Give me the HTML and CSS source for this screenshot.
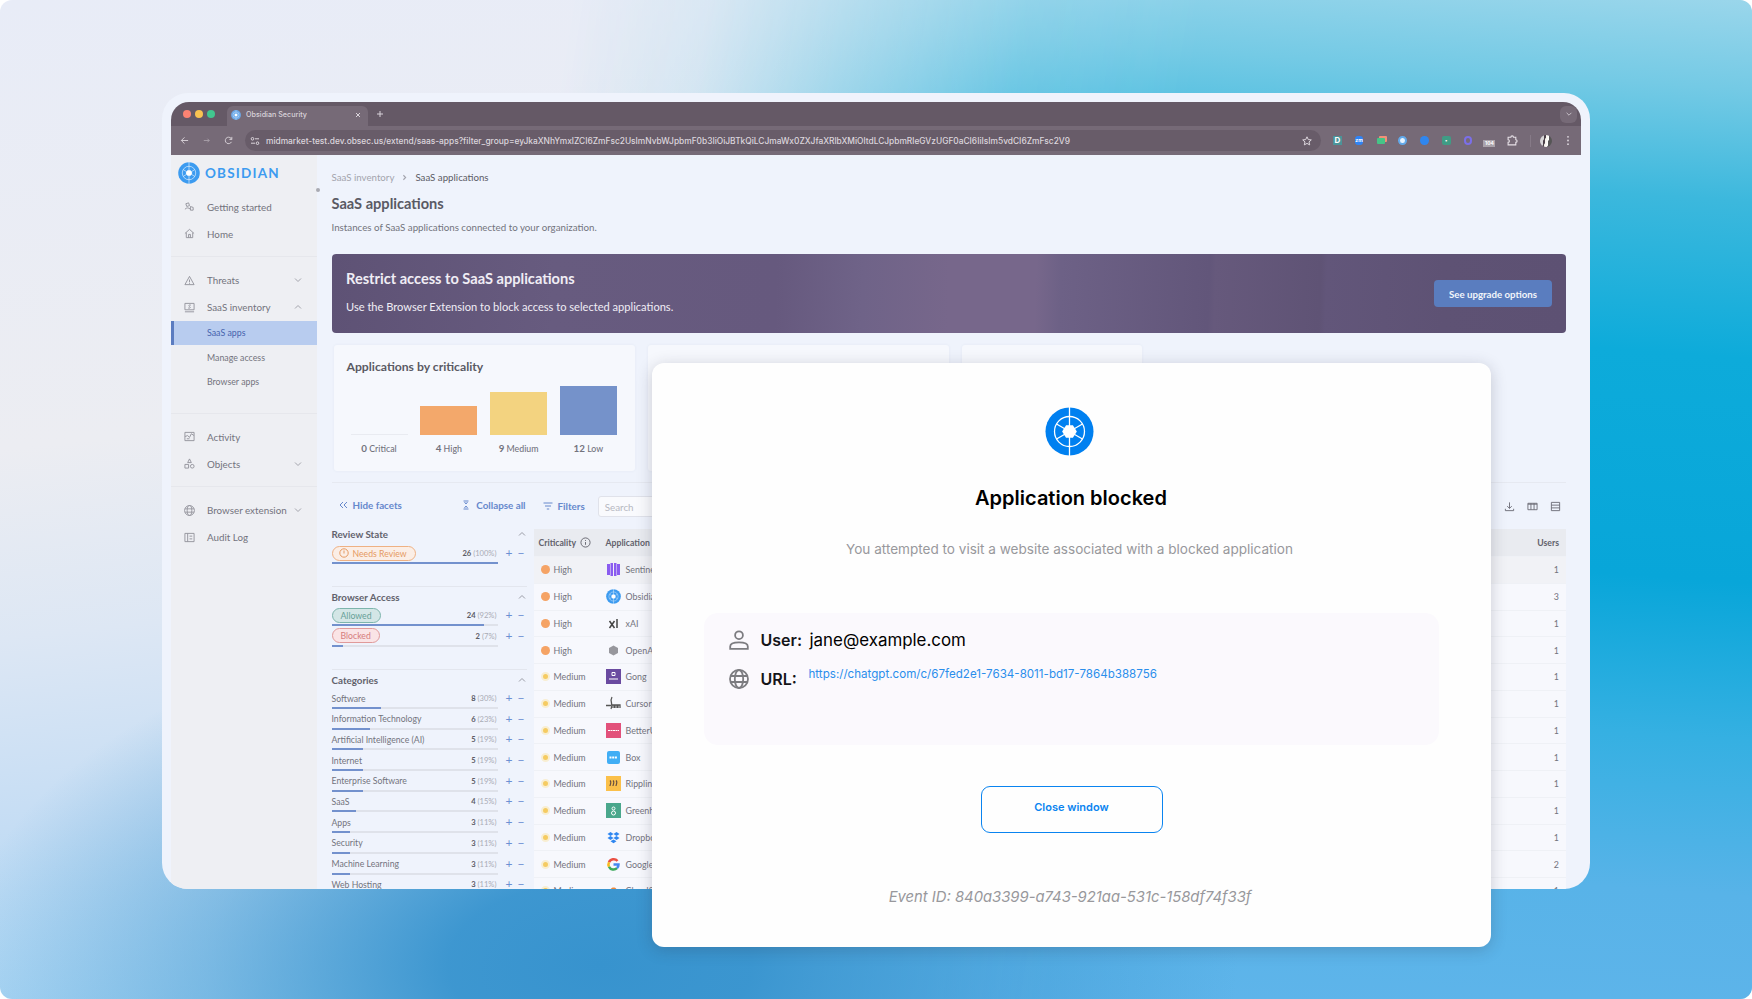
FILE: index.html
```
<!DOCTYPE html>
<html lang="en">
<head>
    <meta charset="UTF-8">
    <meta name="viewport" content="width=device-width, initial-scale=1.0">
    <title>Obsidian Security</title>
    <link rel="stylesheet" href="styles.css">
</head>
<body>
    <svg class="sprite" width="0" height="0">
        <symbol id="logo" viewBox="0 0 50 50">
            <circle cx="25" cy="25" r="24.5" fill="currentColor"/>
            <g fill="none" stroke="#fff" stroke-width="1.3">
                <circle cx="25" cy="25" r="15.3"/>
                <path d="M25 0v50M11.8 17.4l26.4 15.2M38.2 17.4L11.8 32.6"/>
            </g>
            <path fill="#fff" d="M21.5 18.5h7l4 6.5-4 6.5h-7l-4-6.5z"/>
        </symbol>
        <symbol id="down" viewBox="0 0 10 10"><path d="M2 3.5l3 3 3-3"/></symbol>
        <symbol id="up" viewBox="0 0 10 10"><path d="M2 6.5l3-3 3 3"/></symbol>
        <symbol id="globe" viewBox="0 0 20 20">
            <circle cx="10" cy="10" r="9"/>
            <ellipse cx="10" cy="10" rx="4.2" ry="9"/>
            <path d="M1.8 7h16.4M1.8 13h16.4"/>
        </symbol>
    </svg>

    <div class="page">
        <div class="window">
            <div class="browser">
                <div class="tabbar">
                    <div class="lights"><i class="red"></i><i class="yellow"></i><i class="green"></i></div>
                    <div class="tab">
                        <svg class="favicon"><use href="#logo"/></svg>
                        <span>Obsidian Security</span>
                        <svg class="tab-close" viewBox="0 0 6 6"><path d="M1 1l4 4M5 1L1 5"/></svg>
                    </div>
                    <svg class="tab-new" viewBox="0 0 8 8"><path d="M4 1v6M1 4h6"/></svg>
                    <div class="tab-list"><svg viewBox="0 0 10 10"><use href="#down"/></svg></div>
                </div>
                <div class="toolbar">
                    <div class="nav-buttons">
                        <svg viewBox="0 0 10 10"><path d="M9 5H1.5M5 1.5L1.5 5 5 8.5"/></svg>
                        <svg class="dim" viewBox="0 0 10 10"><path d="M2 5h6M6 3l2 2-2 2"/></svg>
                        <svg viewBox="0 0 10 10"><path d="M8.3 6.5A3.6 3.6 0 1 1 7.8 2.6L8.5 3.6M8.7 1v2.8H6"/></svg>
                    </div>
                    <div class="urlbar">
                        <svg viewBox="0 0 10 10"><circle cx="2.5" cy="2.8" r="1.3"/><path d="M5 2.8h4M1 7.2h4"/><circle cx="7.5" cy="7.2" r="1.3"/></svg>
                        <span class="url">midmarket-test.dev.obsec.us/extend/saas-apps?filter_group=eyJkaXNhYmxlZCI6ZmFsc2UsImNvbWJpbmF0b3IiOiJBTkQiLCJmaWx0ZXJfaXRlbXMiOltdLCJpbmRleGVzUGF0aCI6IiIsIm5vdCI6ZmFsc2V9</span>
                        <svg class="star" viewBox="0 0 10 10"><path d="M5 .8l1.3 2.8 3 .3-2.3 2 .7 3L5 7.400 2.300 8.900l.7-3-2.300-2 3-.3z"/></svg>
                    </div>
                    <div class="extensions">
                        <span class="ext ext-d">D</span>
                        <span class="ext ext-zm">zm</span>
                        <span class="ext ext-cards"></span>
                        <span class="ext ext-ring"></span>
                        <span class="ext ext-blue"></span>
                        <span class="ext ext-green">•</span>
                        <span class="ext ext-purple"></span>
                        <span class="ext ext-count">104</span>
                        <svg class="ext" viewBox="0 0 10 10"><path d="M1 2h2.500a1.200 1.200 0 0 1 2.400 0H8v2.300a1.200 1.200 0 0 1 0 2.400V9H1V6.700a1.200 1.200 0 0 0 0-2.400z"/></svg>
                    </div>
                    <span class="avatar"></span>
                    <svg class="menu-dots" viewBox="0 0 4 12"><circle cx="2" cy="2" r="1"/><circle cx="2" cy="6" r="1"/><circle cx="2" cy="10" r="1"/></svg>
                </div>

                <div class="app">
                    <aside class="sidebar">
                        <div class="brand"><svg><use href="#logo"/></svg><span>OBSIDIAN</span></div>
                        <nav>
                            <a class="item"><svg viewBox="0 0 12 12"><path d="M2 3l3-1 1 3-3 1zM1 9c2-2 4-2 6 0M7 6l3 1v3H7z"/></svg>Getting started</a>
                            <a class="item"><svg viewBox="0 0 12 12"><path d="M1 6l5-4.500L11 6M2.500 5v5.500h7V5M5 10.500V7h2v3.500"/></svg>Home</a>
                        </nav>
                        <nav>
                            <a class="item"><svg viewBox="0 0 12 12"><path d="M6 1.500l5 9H1zM6 5v3M6 8.800v.8"/></svg>Threats<svg class="chev"><use href="#down"/></svg></a>
                            <a class="item"><svg viewBox="0 0 12 12"><path d="M1 1.500h10v7H1zM1 10.700h10M7.500 3.500c-2-1-3 .8-1.500 1.500s1 2.300-1.500 1.500"/></svg>SaaS inventory<svg class="chev"><use href="#up"/></svg></a>
                            <a class="sub active">SaaS apps</a>
                            <a class="sub">Manage access</a>
                            <a class="sub">Browser apps</a>
                        </nav>
                        <nav class="after-sub">
                            <a class="item"><svg viewBox="0 0 12 12"><path d="M1 1.500h10v9H1zM1 6l3-1 2 2 2-4 3 2M3 8.500h3"/></svg>Activity</a>
                            <a class="item"><svg viewBox="0 0 12 12"><path d="M6 1l2 4H4zM1 7h4v4H1z"/><circle cx="9" cy="9" r="2"/></svg>Objects<svg class="chev"><use href="#down"/></svg></a>
                        </nav>
                        <nav>
                            <a class="item"><svg viewBox="0 0 20 20" class="thick"><use href="#globe"/></svg>Browser extension<svg class="chev"><use href="#down"/></svg></a>
                            <a class="item"><svg viewBox="0 0 12 12"><path d="M1 1.500h10v9H1zM4 1.500v9M6 4.500h3M6 7.500h3"/></svg>Audit Log</a>
                        </nav>
                        <span class="collapse-handle"></span>
                    </aside>

                    <main>
                        <div class="breadcrumb"><span>SaaS inventory</span><svg viewBox="0 0 6 8"><path d="M2 2l2 2-2 2"/></svg><b>SaaS applications</b></div>
                        <h1>SaaS applications</h1>
                        <p class="intro">Instances of SaaS applications connected to your organization.</p>

                        <section class="banner">
                            <div>
                                <h2>Restrict access to SaaS applications</h2>
                                <p>Use the Browser Extension to block access to selected applications.</p>
                            </div>
                            <button>See upgrade options</button>
                        </section>

                        <section class="cards">
                            <div class="card">
                                <h3>Applications by criticality</h3>
                                <div class="chart">
                                    <div class="col"><div class="bar zero"></div><span><b>0</b> Critical</span></div>
                                    <div class="col"><div class="bar high"></div><span><b>4</b> High</span></div>
                                    <div class="col"><div class="bar medium"></div><span><b>9</b> Medium</span></div>
                                    <div class="col"><div class="bar low"></div><span><b>12</b> Low</span></div>
                                </div>
                            </div>
                            <div class="card wide"></div>
                            <div class="card small"></div>
                        </section>

                        <section class="listing">
                            <div class="facets">
                                <div class="facet-tools">
                                    <a><svg viewBox="0 0 10 10"><path d="M5 2L2 5l3 3M9 2L6 5l3 3"/></svg>Hide facets</a>
                                    <a><svg viewBox="0 0 10 10"><path d="M2.500 1h5M2.500 9h5M3.500 2L5 4l1.500-2M3.500 8L5 6l1.500 2"/></svg>Collapse all</a>
                                </div>
                                <div class="facet-group review">
                                    <h4>Review State<svg class="chev"><use href="#up"/></svg></h4>
                                    <div id="reviewState"></div>
                                </div>
                                <div class="facet-group access">
                                    <h4>Browser Access<svg class="chev"><use href="#up"/></svg></h4>
                                    <div id="browserAccess"></div>
                                </div>
                                <div class="facet-group">
                                    <h4>Categories<svg class="chev"><use href="#up"/></svg></h4>
                                    <div id="categories"></div>
                                </div>
                            </div>
                            <div class="results">
                                <div class="result-tools">
                                    <a><svg viewBox="0 0 10 10"><path d="M.5 2h9M2 5h6M3.800 8h2.400"/></svg>Filters</a>
                                    <div class="search">Search</div>
                                    <div class="view-icons">
                                        <svg viewBox="0 0 12 12"><path d="M6 1.500V8M3.500 5.700L6 8l2.500-2.300M1.500 8.500v2h9v-2"/></svg>
                                        <svg viewBox="0 0 12 12"><path d="M1 2.500h10v7H1zM4.300 2.500v7M7.700 2.500v7M1 3.500h10"/></svg>
                                        <svg viewBox="0 0 12 12"><path d="M1.500 1.500h9v9h-9zM1.500 4.500h9M1.500 7.500h9"/></svg>
                                    </div>
                                </div>
                                <div class="table">
                                    <div class="row head">
                                        <span class="crit">Criticality<svg viewBox="0 0 12 12"><circle cx="6" cy="6" r="5"/><path d="M6 5.500v3M6 3.300v1"/></svg></span>
                                        <span class="app-name">Application</span>
                                        <span class="users">Users</span>
                                    </div>
                                    <div id="rows"></div>
                                </div>
                            </div>
                        </section>
                    </main>
                </div>
            </div>
        </div>

        <div class="modal">
            <svg class="modal-logo"><use href="#logo"/></svg>
            <h2>Application blocked</h2>
            <p class="lead">You attempted to visit a website associated with a blocked application</p>
            <div class="details">
                <div class="detail">
                    <svg viewBox="0 0 20 20"><circle cx="10" cy="5.200" r="3.900"/><path d="M1.200 18.800v-2.300c0-5.400 17.600-5.400 17.600 0v2.300z"/></svg>
                    <b>User:</b><span>jane@example.com</span>
                </div>
                <div class="detail">
                    <svg viewBox="0 0 20 20"><use href="#globe"/></svg>
                    <b>URL:</b><a>https://chatgpt.com/c/67fed2e1-7634-8011-bd17-7864b388756</a>
                </div>
            </div>
            <button>Close window</button>
            <p class="event">Event ID: 840a3399-a743-921aa-531c-158df74f33f</p>
        </div>
    </div>

    <script>
        const reviewState = [['Needs Review', 26, 100, 'needs']];
        const browserAccess = [['Allowed', 24, 92, 'allowed'], ['Blocked', 2, 7, 'blocked']];
        const categories = [
            ['Software', 8, 30], ['Information Technology', 6, 23], ['Artificial Intelligence (AI)', 5, 19],
            ['Internet', 5, 19], ['Enterprise Software', 5, 19], ['SaaS', 4, 15], ['Apps', 3, 11],
            ['Security', 3, 11], ['Machine Learning', 3, 11], ['Web Hosting', 3, 11]
        ];

        // App icons, 15px boxes
        const icons = {
            sentinel: '<path fill="#8a5cf0" d="M1 2h3v11H1zM4.500 1h2.500v13H4.500zM8 1h2.500v13H8zM11 2h3v11h-3z"/>',
            obsidian: '<use href="#logo" width="15" height="15"/>',
            xai: '<path fill="none" stroke="#444" stroke-width="1.500" d="M3.500 5l5 7M8.500 5l-5 7M11 3v9"/>',
            openai: '<path fill="#97979d" d="M7.500 2.500l4.500 2.500v5l-4.500 2.500L3 10V5z"/>',
            gong: '<path fill="#6a4aa0" d="M0 0h15v15H0z"/><path fill="none" stroke="#fff" d="M6 3.500h3v3H6zM3 10h9"/>',
            cursor: '<path fill="none" stroke="#555" stroke-width="1.300" d="M6 1C3 6 8 8 5 13M0 9.500h5M6 12V9h2v3M9 12V9h2v3M12 12V9h2v3"/>',
            better: '<path fill="#e2517b" d="M0 0h15v15H0z"/><path stroke="#fff" stroke-dasharray="2 .5" d="M2 7.500h11"/>',
            box: '<rect x="1" y="1" width="13" height="13" rx="2" fill="#41aef5"/><path stroke="#fff" stroke-width="2" stroke-dasharray="2 .7" d="M3.500 7.500h8"/>',
            rippling: '<path fill="#fbc04a" d="M0 0h15v15H0z"/><path fill="none" stroke="#6b5140" stroke-width="1.200" d="M4 4.500c2 1.500 0 4 0 5.500M7 4.500c2 1.500 0 4 0 5.500M10 4.500c2 1.500 0 4 0 5.500"/>',
            greenhouse: '<path fill="#4aa78c" d="M0 0h15v15H0z"/><g fill="none" stroke="#fff"><circle cx="7.500" cy="5.500" r="1.500"/><circle cx="7.500" cy="10" r="2"/></g>',
            dropbox: '<path fill="#2f86f0" d="M4.500 2l3 2-3 2-3-2zM10.500 2l3 2-3 2-3-2zM4.500 6l3 2-3 2-3-2zM10.500 6l3 2-3 2-3-2zM7.500 9.500l3 1.700-3 2-3-2z"/>',
            google: '<g fill="none" stroke-width="2.500"><path stroke="#ea4f43" d="M11.500 4A5 5 0 0 0 3 5.300"/><path stroke="#f9bb20" d="M3 5.300a5 5 0 0 0 0 4.400"/><path stroke="#3caa5a" d="M3 9.700a5 5 0 0 0 8 1.500"/><path stroke="#4587f0" d="M11 11.200a5 5 0 0 0 1.500-3.700H7.500"/></g>',
            cloud: '<path fill="#f08a3c" d="M1 11c0-3 2-3 3-3 1-5 7-4 7 0 3 0 3 3 3 3z"/>'
        };
        const apps = [
            ['High', 'Sentinel', 'sentinel', 1], ['High', 'Obsidian', 'obsidian', 3], ['High', 'xAI', 'xai', 1],
            ['High', 'OpenAI', 'openai', 1], ['Medium', 'Gong', 'gong', 1], ['Medium', 'Cursor', 'cursor', 1],
            ['Medium', 'BetterUp', 'better', 1], ['Medium', 'Box', 'box', 1], ['Medium', 'Rippling', 'rippling', 1],
            ['Medium', 'Greenhouse', 'greenhouse', 1], ['Medium', 'Dropbox', 'dropbox', 1],
            ['Medium', 'Google', 'google', 2], ['Medium', 'Cloudflare', 'cloud', 1]
        ];

        function facetHtml([name, count, pct, pill]) {
            const clock = pill === 'needs' ? '<svg viewBox="0 0 10 10"><circle cx="5" cy="5" r="4.200"/><path d="M5 2.500v3"/></svg>' : '';
            const label = pill ? `<span class="pill ${pill}">${clock}${name}</span>` : `<span>${name}</span>`;
            return `<div class="facet">
                <div class="facet-line">${label}<span class="count"><b>${count}</b> (${pct}%)</span><i>+</i><i>−</i></div>
                <div class="meter"><div style="width: ${pct}%"></div></div>
            </div>`;
        }

        function rowHtml([level, name, icon, users]) {
            return `<div class="row">
                <span class="crit"><i class="dot ${level.toLowerCase()}"></i>${level}</span>
                <span class="app-name"><svg viewBox="0 0 15 15">${icons[icon]}</svg>${name}</span>
                <span class="users">${users}</span>
            </div>`;
        }

        document.getElementById('reviewState').innerHTML = reviewState.map(facetHtml).join('');
        document.getElementById('browserAccess').innerHTML = browserAccess.map(facetHtml).join('');
        document.getElementById('categories').innerHTML = categories.map(facetHtml).join('');
        document.getElementById('rows').innerHTML = apps.map(rowHtml).join('');
    </script>
</body>
</html>
```
FILE: styles.css
```
* {
    box-sizing: border-box;
}
body {
    margin: 0;
    background: #fff;
    font-family: Lato, sans-serif;
    font-size: 9.8px;
    color: #73737d;
}
h1, h2, h3, h4, p {
    margin: 0;
}
svg {
    flex: none;
    fill: none;
    stroke: currentColor;
}
.sprite {
    position: absolute;
}
#logo {
    stroke: none;
}
.page {
    position: relative;
    width: 1752px;
    height: 999px;
    padding: 93px 162px 0;
    border-radius: 12px;
    overflow: hidden;
    background: linear-gradient(174deg, #e8ecf7 0%, #ecedf2 38%, #dde7f4 54%, #c5ddf4 70%, #a3d3f3 88%, #98d0f2 100%);
}
/* right half of the backdrop, faded in over the light base */
.page::before {
    content: "";
    position: absolute;
    inset: 0;
    background: linear-gradient(184deg, #9ad6eb 0%, #74cae5 8%, #3cb8dd 18%, #0dabda 32%, #08a6d9 52%, #35b0e2 66%, #58b3e8 80%, #62b5eb 100%);
    -webkit-mask-image: linear-gradient(99deg, transparent 30%, rgba(0,0,0,0.13) 37%, rgba(0,0,0,0.5) 45%, rgba(0,0,0,0.88) 54%, #000 63%);
    mask-image: linear-gradient(99deg, transparent 30%, rgba(0,0,0,0.13) 37%, rgba(0,0,0,0.5) 45%, rgba(0,0,0,0.88) 54%, #000 63%);
}
.page::after {
    content: "";
    position: absolute;
    inset: 0;
    background: radial-gradient(ellipse 760px 420px at 600px 965px, #3793ce 0%, rgba(55,147,206,0.94) 20%, rgba(55,147,206,0.42) 52%, rgba(55,147,206,0) 84%);
}
.window {
    position: relative;
    z-index: 1;
    width: 1428px;
    height: 796px;
    padding: 9px 9px 0;
    border-radius: 26px;
    background: #eff3fc;
    overflow: hidden;
}
.browser {
    height: 787px;
    border-radius: 18px 18px 0 0;
    overflow: hidden;
}

/* browser chrome */
.tabbar {
    display: flex;
    align-items: center;
    height: 24px;
    padding: 0 4px 0 12px;
    background: #655966;
    color: #d9d3da;
}
.lights {
    display: flex;
    gap: 4px;
    width: 44px;
}
.lights i {
    width: 8px;
    height: 8px;
    border-radius: 50%;
}
.red { background: #fb8373; }
.yellow { background: #f9c351; }
.green { background: #41c78f; }
.tab {
    display: flex;
    align-items: center;
    align-self: flex-end;
    width: 141px;
    height: 20px;
    padding: 0 7px 3px 4px;
    border-radius: 6px 6px 0 0;
    background: #766a77;
    font: 500 7.2px Inter, sans-serif;
}
.favicon {
    width: 10px;
    height: 10px;
    margin-right: 5px;
    color: #6ba9ea;
}
.tab-close {
    width: 6px;
    height: 6px;
    margin-left: auto;
}
.tab-new {
    width: 8px;
    height: 8px;
    margin-left: 8px;
}
.tab-list {
    display: flex;
    justify-content: center;
    align-items: center;
    width: 17px;
    height: 17px;
    margin-left: auto;
    border-radius: 6px;
    background: #766a77;
}
.tab-list svg {
    width: 8px;
    height: 8px;
}
.toolbar {
    display: flex;
    align-items: center;
    height: 29px;
    padding: 0 11px 0 9px;
    background: #766a77;
    color: #dcd6dd;
}
.nav-buttons {
    display: flex;
    gap: 13px;
    width: 65px;
}
.nav-buttons svg {
    width: 9px;
    height: 9px;
}
.dim {
    opacity: 0.5;
}
.urlbar {
    display: flex;
    align-items: center;
    width: 1076px;
    height: 21px;
    padding: 0 9px 0 5px;
    border-radius: 11px;
    background: #685c69;
}
.urlbar svg {
    width: 10px;
    height: 10px;
}
.url {
    margin-left: 6px;
    font: 500 8.37px Inter, sans-serif;
    white-space: nowrap;
}
.urlbar .star {
    margin-left: auto;
}
.extensions {
    display: flex;
    gap: 13.2px;
    align-items: center;
    margin-left: 12px;
    padding-right: 12px;
    border-right: 1px solid #867a87;
}
.ext {
    width: 8.6px;
    height: 9px;
    font: bold 5px/9px Inter, sans-serif;
    text-align: center;
    color: #fff;
}
svg.ext {
    width: 11px;
    height: 11px;
    color: #e6e0e6;
}
.ext-d { background: #4b9499; font-size: 8px; }
.ext-zm { background: #2f83f5; border-radius: 3px; }
.ext-cards { height: 6px; background: #45c487; border-radius: 1px; box-shadow: 2px -2px 0 #f09078; }
.ext-ring { background: #e8f4ff; border-radius: 50%; border: 2.5px solid #62a9ea; }
.ext-blue { background: #2f86ee; border-radius: 50%; }
.ext-green { background: #3f9c85; border-radius: 2px; }
.ext-purple { border: 2px solid #7b6fe8; border-radius: 4px; }
.ext-count { width: 12px; height: 7px; margin: 5px -2px 0; background: #a9a2aa; line-height: 7px; }
.avatar {
    width: 12px;
    height: 12px;
    margin-left: 9px;
    border-radius: 50%;
    background: linear-gradient(100deg, #d8d6d8 30%, #4a4048 32%, #4a4048 42%, #f3efe8 44%, #fff 66%, #555 68%);
}
.menu-dots {
    width: 4px;
    height: 11px;
    margin-left: auto;
    fill: currentColor;
    stroke: none;
}

/* app */
.app {
    display: flex;
    height: 734px;
}
.sidebar {
    position: relative;
    width: 146px;
    background: #eeeff3;
}
.brand {
    display: flex;
    align-items: center;
    height: 38px;
    padding: 0 0 2px 7px;
    color: #3c9bf0;
    font-weight: bold;
    font-size: 13.5px;
    letter-spacing: 1.2px;
}
.brand svg {
    width: 22px;
    height: 22px;
    margin-right: 5px;
}
.sidebar nav + nav {
    margin-top: 9px;
    padding-top: 9.5px;
    border-top: 1px solid #e6e7ec;
}
.sidebar nav.after-sub {
    margin-top: 19px;
}
.item {
    display: flex;
    align-items: center;
    height: 27px;
    padding: 0 14px 0 13px;
}
.item > svg:first-child {
    width: 11px;
    height: 11px;
    margin-right: 12px;
    opacity: 0.75;
}
.thick {
    stroke-width: 1.6;
}
.chev {
    width: 10px;
    height: 10px;
    margin-left: auto;
    opacity: 0.6;
}
.sub {
    display: flex;
    align-items: center;
    height: 24.4px;
    padding-left: 36px;
    font-size: 8.8px;
}
.sub.active {
    padding-left: 33px;
    border-left: 3px solid #5b7cc0;
    background: #b8ccef;
    color: #4663ad;
}
.collapse-handle {
    position: absolute;
    top: 33px;
    right: -3px;
    width: 4px;
    height: 4px;
    border-radius: 2px;
    background: #a9aab2;
}
main {
    flex: 1;
    padding: 0 15px 0 14.5px;
    min-width: 0;
}
.breadcrumb {
    display: flex;
    align-items: center;
    margin-top: 14px;
    height: 16px;
    font-size: 9.7px;
    color: #a3a4ad;
}
.breadcrumb svg {
    width: 7px;
    height: 9px;
    margin: 0 7px;
}
.breadcrumb b {
    font-weight: normal;
    color: #5b5b65;
}
h1 {
    margin-top: 9px;
    font-size: 14.6px;
    line-height: 20px;
    color: #5a5a64;
}
.intro {
    margin-top: 5px;
    font-size: 9.75px;
    line-height: 16px;
}
.banner {
    display: flex;
    justify-content: space-between;
    align-items: center;
    height: 79px;
    margin-top: 19px;
    padding: 0 14px 0 14.5px;
    border-radius: 4px;
    background: linear-gradient(92deg, #5e5275 0%, #675b7f 18%, #66597e 36%, #6f6388 43%, #77678b 50%, #77678b 57%, #6d6186 59%, #62567a 71%, #66597c 71.5%, #5f5375 80%, #62567a 80.5%, #5e5274 90%, #5d5173 100%);
    color: #f0edf5;
}
.banner h2 {
    font-size: 14.6px;
    line-height: 20px;
}
.banner p {
    margin: 10px 0 4px;
    font-size: 11.1px;
    line-height: 16px;
}
.banner button {
    width: 118px;
    height: 27px;
    padding: 1px 0 0;
    border: none;
    border-radius: 4px;
    background: #5a7dbf;
    color: #f2f5fb;
    font: bold 9.7px Lato, sans-serif;
}
.cards {
    display: flex;
    padding: 12px 0 11px 2px;
    border-bottom: 1px solid #e6e9f1;
}
.card {
    width: 301px;
    height: 126px;
    padding: 14px 13px;
    border-radius: 3px;
    background: #f6f8fd;
    box-shadow: 0 0 3px rgba(90,100,130,0.07);
}
.card.wide {
    margin-left: 13px;
}
.card.small {
    width: 180px;
    margin-left: 13px;
}
.card h3 {
    font-size: 12.2px;
    line-height: 16px;
    color: #5a5a64;
}
.chart {
    display: flex;
    gap: 12.8px;
    padding-left: 4px;
}
.col {
    display: flex;
    flex-direction: column;
    justify-content: flex-end;
    align-items: center;
    width: 57px;
    height: 79px;
    font-size: 8.8px;
    font-weight: 500;
    white-space: nowrap;
}
.col b {
    font-size: 9.8px;
}
.bar {
    width: 57px;
    margin-bottom: 7px;
}
.bar.zero { height: 1px; background: #e9ebf1; }
.bar.high { height: 29px; background: #f3a86b; }
.bar.medium { height: 43px; background: #f3d380; }
.bar.low { height: 49px; background: #7592ca; }

.listing {
    display: flex;
}
.facets {
    width: 202px;
}
.facet-tools, .facet-tools a, .result-tools, .result-tools a, .view-icons {
    display: flex;
    align-items: center;
}
.facet-tools {
    justify-content: space-between;
    height: 44px;
    padding: 0 8px 0 6px;
}
.facet-tools a, .result-tools a {
    font-weight: bold;
    color: #6688cc;
    font-size: 9.8px;
}
.facet-tools svg, .result-tools a svg {
    width: 10px;
    height: 10px;
    margin-right: 5px;
}
.facet-group {
    width: 195px;
    padding-top: 3px;
    border-bottom: 1px solid #e3e6ee;
}
.facet-group h4 {
    display: flex;
    align-items: center;
    height: 14px;
    margin-bottom: 2px;
    font-size: 9.8px;
    color: #62626c;
}
.facet-group.review {
    height: 60px;
    padding-top: 0;
}
.facet-group.review h4 {
    margin-bottom: 3px;
}
.facet-group.access {
    height: 83px;
}
.facet {
    height: 20.7px;
    font-size: 8.7px;
}
.facet-line {
    display: flex;
    align-items: center;
    height: 18px;
    white-space: nowrap;
}
.count {
    margin-left: auto;
    padding-right: 7px;
    font-size: 7.6px;
    color: #a9abb5;
}
.count b {
    color: #5b5b65;
}
.facet i {
    width: 11px;
    text-align: center;
    font-style: normal;
    font-size: 12px;
    line-height: 12px;
    color: #6d8fd3;
}
.facet i + i {
    margin-left: 1px;
}
.meter {
    width: 166px;
    height: 2px;
    background: #dfe2ea;
}
.meter div {
    height: 2px;
    background: #7391cd;
}
.pill {
    display: flex;
    align-items: center;
    height: 15px;
    padding: 0 8px;
    border: 1px solid;
    border-radius: 8px;
}
.pill svg {
    width: 10px;
    height: 10px;
    margin: 0 4px 0 -2px;
}
.pill.needs { background: #fbeee6; border-color: #efb183; color: #e59a62; }
.pill.allowed { background: #d3e6e6; border-color: #7db5ac; color: #66a096; }
.pill.blocked { background: #fae4e6; border-color: #e09a9a; color: #d67c7c; }

.results {
    flex: 1;
}
.result-tools {
    height: 46px;
    padding-right: 5px;
}
.result-tools a {
    padding-left: 9px;
}
.search {
    width: 220px;
    height: 21px;
    margin-left: 13px;
    padding-left: 6px;
    border: 1px solid #e0e2ea;
    border-radius: 3px;
    background: #f9fafd;
    color: #b6b8c1;
    line-height: 20px;
}
.view-icons {
    gap: 12px;
    margin-left: auto;
    color: #6b6b75;
}
.view-icons svg {
    width: 11px;
    height: 11px;
}
.table {
    background: #f7f8fd;
}
.row {
    display: flex;
    align-items: center;
    height: 26.75px;
    padding: 0 7px;
    border-bottom: 1px solid #eff1f6;
    font-size: 8.9px;
}
.row.head {
    height: 28px;
    padding-left: 5px;
    background: #e9ebf0;
    font-size: 8.7px;
    font-weight: bold;
    color: #62626c;
}
#rows .row:first-child {
    background: #f1f2f6;
}
.crit, .app-name {
    display: flex;
    align-items: center;
}
.crit {
    width: 65px;
}
.head .crit {
    width: 67px;
}
.crit svg {
    width: 11px;
    height: 11px;
    margin-left: 4px;
}
.dot {
    width: 9px;
    height: 9px;
    margin-right: 4px;
    border-radius: 50%;
    background: #f5a365;
}
.dot.medium {
    border: 2px solid #f8eed2;
    background: #f5cb62;
}
.app-name svg {
    width: 15px;
    height: 15px;
    margin-right: 5px;
    stroke: none;
    color: #3c9bf0;
}
.users {
    margin-left: auto;
}

/* blocked dialog */
.modal {
    position: absolute;
    z-index: 2;
    left: 652px;
    top: 363px;
    display: flex;
    flex-direction: column;
    align-items: center;
    width: 839px;
    height: 584px;
    padding-top: 44px;
    border-radius: 12px;
    background: #fefefe;
    box-shadow: 0 3px 16px rgba(40,40,60,0.22);
    font-family: Inter, sans-serif;
    color: #141418;
}
.modal-logo {
    width: 49px;
    height: 49px;
    margin-right: 4px;
    color: #0080f0;
}
.modal h2 {
    margin-top: 30px;
    margin-right: 1px;
    font-size: 20px;
    font-weight: 600;
    line-height: 24px;
    color: #000;
}
.lead {
    margin: 30px 4px 0 0;
    font-size: 13.55px;
    line-height: 18px;
    color: #98989c;
}
.details {
    width: 735px;
    height: 132px;
    margin-top: 55px;
    margin-right: 1px;
    padding: 10px 25px;
    border-radius: 14px;
    background: #fbf9fd;
}
.detail {
    display: flex;
    align-items: center;
    height: 34px;
    font-size: 16px;
}
.detail + .detail {
    height: 43px;
}
.detail svg {
    width: 20px;
    height: 20px;
    margin-right: 12px;
    color: #7c7c80;
    stroke-width: 1.8;
}
.detail b {
    width: 48px;
    font-weight: 600;
}
.detail span {
    margin-left: 1px;
    font-size: 16.9px;
    color: #000;
}
.detail a {
    margin-top: -9px;
    font-size: 11.6px;
    color: #2a8eec;
}
.modal button {
    width: 182px;
    height: 47px;
    margin: 41px 0 0;
    padding: 0 0 6px;
    border: 1.5px solid #0a84f0;
    border-radius: 9px;
    background: #fefefe;
    color: #0a84f0;
    font: 600 11px Inter, sans-serif;
}
.event {
    margin-top: 54px;
    margin-right: 3px;
    font-size: 14.8px;
    font-style: italic;
    line-height: 20px;
    color: #98989c;
}
```
